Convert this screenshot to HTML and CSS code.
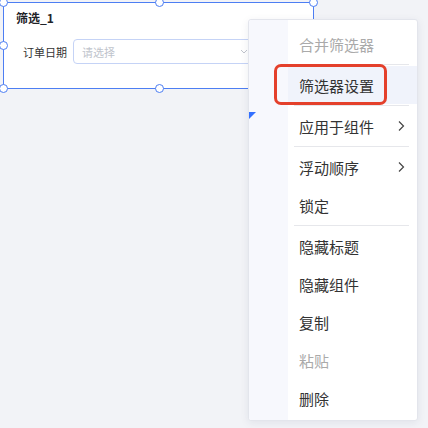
FILE: index.html
```html
<!DOCTYPE html>
<html lang="zh-CN">
<head>
  <meta charset="UTF-8">
  <title>筛选器</title>
  <link rel="stylesheet" href="styles.css">
</head>
<body>

  <div class="widget">
    <span class="handle h-tl"></span>
    <span class="handle h-tm"></span>
    <span class="handle h-tr"></span>
    <span class="handle h-ml"></span>
    <span class="handle h-bl"></span>
    <span class="handle h-bm"></span>
    <div class="widget-title">筛选_1</div>
    <div class="field">
      <label>订单日期</label>
      <div class="select">
        <span class="placeholder">请选择</span>
        <svg class="select-arrow" width="8" height="5" viewBox="0 0 8 5"><path d="M1 1l3 3 3-3" fill="none" stroke="#c0c4cc" stroke-width="1"/></svg>
      </div>
    </div>
  </div>

  <div class="menu">
    <div class="menu-side"><span class="corner"></span></div>
    <ul class="menu-list">
      <li class="disabled">合并筛选器</li>
      <li class="sep"></li>
      <li class="active">筛选器设置</li>
      <li class="sep"></li>
      <li class="sub">应用于组件 <svg width="8" height="12" viewBox="0 0 8 12"><path d="M2 1.5l4.5 4.5-4.5 4.5" fill="none" stroke="#444" stroke-width="1.2"/></svg></li>
      <li class="sep"></li>
      <li class="sub">浮动顺序 <svg width="8" height="12" viewBox="0 0 8 12"><path d="M2 1.5l4.5 4.5-4.5 4.5" fill="none" stroke="#444" stroke-width="1.2"/></svg></li>
      <li>锁定</li>
      <li class="sep"></li>
      <li>隐藏标题</li>
      <li>隐藏组件</li>
      <li>复制</li>
      <li class="disabled">粘贴</li>
      <li>删除</li>
    </ul>
    <div class="mark"></div>
  </div>

</body>
</html>
```

FILE: styles.css
```css
body {
  margin: 0;
  background: #f2f3f7;
  font-family: "Noto Sans CJK SC", "Noto Sans", sans-serif;
  color: #333;
  height: 428px;
  overflow: hidden;
}
.widget {
  position: relative;
  box-sizing: border-box;
  margin: 2px 0 0 3px;
  width: 311px;
  height: 87px;
  background: #fff;
  border: 1px solid #4d7ef3;
  padding: 7px 12px 0 12px;
}
.handle {
  position: absolute;
  width: 7px;
  height: 7px;
  border: 1px solid #4d7ef3;
  border-radius: 50%;
  background: #fff;
}
.h-tl { left: -5px; top: -5px; }
.h-tm { left: 151px; top: -5px; }
.h-tr { right: -5px; top: -5px; }
.h-ml { left: -5px; top: 38px; }
.h-bl { left: -5px; bottom: -5px; }
.h-bm { left: 151px; bottom: -5px; }
.widget-title {
  font-size: 12px;
  font-weight: bold;
  line-height: 16px;
  color: #1f2329;
}
.field {
  display: flex;
  align-items: center;
  gap: 6px;
  margin-top: 13px;
  padding-left: 7px;
}
.field label {
  font-size: 11px;
  color: #333;
}
.select {
  box-sizing: border-box;
  width: 190px;
  height: 25px;
  border: 1px solid #c5d3f6;
  border-radius: 4px;
  display: flex;
  align-items: center;
  justify-content: space-between;
  padding: 0 14px 0 8px;
}
.placeholder {
  font-size: 11px;
  color: #c0c4cc;
}
.menu {
  position: absolute;
  left: 248px;
  top: 19px;
  width: 170px;
  height: 402px;
  box-sizing: border-box;
  display: flex;
  background: #fff;
  border: 1px solid #e3e5ec;
  border-radius: 3px;
  box-shadow: 0 2px 8px rgba(30, 40, 80, 0.08);
}
.menu-side {
  position: relative;
  width: 39px;
  background: #f7f8fd;
  border-radius: 3px 0 0 3px;
}
.corner {
  position: absolute;
  left: 0;
  top: 92px;
  width: 0;
  height: 0;
  border-top: 7px solid #3370ff;
  border-right: 7px solid transparent;
}
.menu-list {
  list-style: none;
  margin: 0;
  padding: 5px 0 0 0;
  flex: 1;
}
.menu-list li {
  height: 38px;
  display: flex;
  align-items: center;
  justify-content: space-between;
  padding: 0 12px 0 11px;
  font-size: 15px;
  color: #333;
}
.menu-list li.disabled {
  color: #aaa;
}
.menu-list li.active {
  background: #f0f3fb;
}
.menu-list li.sep {
  height: 1px;
  padding: 0;
  margin: 1px 8px 1px 6px;
  background: #e6e7eb;
}
.mark {
  position: absolute;
  left: 25px;
  top: 44px;
  width: 107px;
  height: 35px;
  border: 3px solid #e4402b;
  border-radius: 7px;
}
```
